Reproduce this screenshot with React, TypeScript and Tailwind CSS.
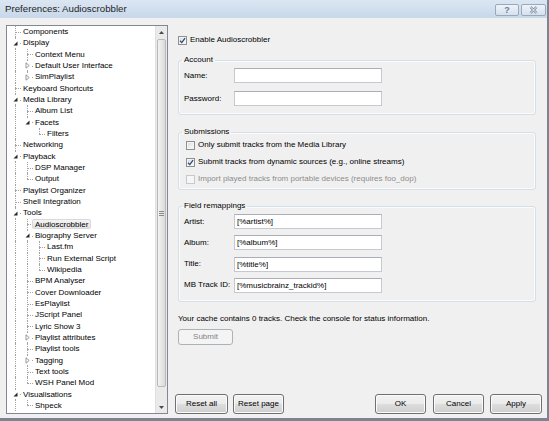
import React from 'react';

type Node = { label: string; level: number; exp?: 'open' | 'closed'; sel?: boolean };

const tree: Node[] = [
  { label: 'Components', level: 0 },
  { label: 'Display', level: 0, exp: 'open' },
  { label: 'Context Menu', level: 1 },
  { label: 'Default User Interface', level: 1, exp: 'closed' },
  { label: 'SimPlaylist', level: 1, exp: 'closed' },
  { label: 'Keyboard Shortcuts', level: 0 },
  { label: 'Media Library', level: 0, exp: 'open' },
  { label: 'Album List', level: 1 },
  { label: 'Facets', level: 1, exp: 'open' },
  { label: 'Filters', level: 2 },
  { label: 'Networking', level: 0 },
  { label: 'Playback', level: 0, exp: 'open' },
  { label: 'DSP Manager', level: 1 },
  { label: 'Output', level: 1 },
  { label: 'Playlist Organizer', level: 0 },
  { label: 'Shell Integration', level: 0 },
  { label: 'Tools', level: 0, exp: 'open' },
  { label: 'Audioscrobbler', level: 1, sel: true },
  { label: 'Biography Server', level: 1, exp: 'open' },
  { label: 'Last.fm', level: 2 },
  { label: 'Run External Script', level: 2 },
  { label: 'Wikipedia', level: 2 },
  { label: 'BPM Analyser', level: 1 },
  { label: 'Cover Downloader', level: 1 },
  { label: 'EsPlaylist', level: 1 },
  { label: 'JScript Panel', level: 1 },
  { label: 'Lyric Show 3', level: 1 },
  { label: 'Playlist attributes', level: 1, exp: 'closed' },
  { label: 'Playlist tools', level: 1 },
  { label: 'Tagging', level: 1, exp: 'closed' },
  { label: 'Text tools', level: 1 },
  { label: 'WSH Panel Mod', level: 1 },
  { label: 'Visualisations', level: 0, exp: 'open' },
  { label: 'Shpeck', level: 1 },
];

// does the item at i have a sibling further down (root level always continues below)
function hasNext(i: number) {
  const L = tree[i].level;
  for (let j = i + 1; j < tree.length; j++) {
    if (tree[j].level < L) return false;
    if (tree[j].level === L) return true;
  }
  return L === 0;
}

function ancestorContinues(i: number, k: number) {
  for (let j = i - 1; j >= 0; j--) {
    if (tree[j].level === k) return hasNext(j);
  }
  return false;
}

const line = 'absolute w-0 border-l border-dotted border-[#a3a3a3]';

function TreeRow({ node, idx }: { node: Node; idx: number }) {
  const L = node.level;
  const x = 8 + 12 * L;
  const ancestors = Array.from({ length: L }, (_, k) => k).filter(k => ancestorContinues(idx, k));
  return (
    <div className="relative h-[11.34px] leading-[11.34px] whitespace-nowrap">
      {ancestors.map(k => (
        <span key={k} className={`${line} top-0 bottom-0`} style={{ left: 8 + 12 * k }} />
      ))}
      <span className={`${line} top-0 ${hasNext(idx) ? 'bottom-0' : 'h-1/2'}`} style={{ left: x }} />
      <span className="absolute top-1/2 h-0 w-[6px] border-t border-dotted border-[#a3a3a3]" style={{ left: x }} />
      {node.exp === 'open' && (
        <svg className="absolute top-[2.5px]" style={{ left: x - 3 }} width="7" height="7" viewBox="0 0 7 7">
          <rect x="0" y="0" width="7" height="7" fill="#fff" />
          <polygon points="5.5,1.5 5.5,5.5 1.5,5.5" fill="#262626" />
        </svg>
      )}
      {node.exp === 'closed' && (
        <svg className="absolute top-[2.5px]" style={{ left: x - 2 }} width="6" height="7" viewBox="0 0 6 7">
          <rect x="0" y="0" width="6" height="7" fill="#fff" />
          <polygon points="1,0.8 4.2,3.5 1,6.2" fill="#fff" stroke="#8f8f8f" strokeWidth="0.9" />
        </svg>
      )}
      {node.sel ? (
        <span
          className="relative inline-block h-[10px] leading-[9px] px-[2px] rounded-[2px] border border-[#d9d9d9] bg-[linear-gradient(to_bottom,#f4f4f4,#e4e4e4)] text-black"
          style={{ marginLeft: 13 + 12 * L }}
        >
          {node.label}
        </span>
      ) : (
        <span className="relative px-[3px] text-black" style={{ marginLeft: 13 + 12 * L }}>
          {node.label}
        </span>
      )}
    </div>
  );
}

function Check({ checked, disabled }: { checked?: boolean; disabled?: boolean }) {
  return (
    <span
      className={`w-[9px] h-[9px] shrink-0 flex items-center justify-center border ${
        disabled
          ? 'border-[#c9c9c9] bg-[#f6f6f6]'
          : 'border-[#8e8f8f] bg-[linear-gradient(135deg,#d6d8db,#ffffff)] shadow-[inset_0_0_0_1px_#f4f4f4]'
      }`}
    >
      {checked && (
        <svg width="7" height="7" viewBox="0 0 7 7">
          <path d="M1 3.7 L2.8 5.6 L6.1 1.1" fill="none" stroke="#30487f" strokeWidth="1.3" />
        </svg>
      )}
    </span>
  );
}

function Group({ title, children, className }: { title: string; children: React.ReactNode; className?: string }) {
  return (
    <fieldset className={`border border-[#d5dfe5] rounded-[3px] shadow-[inset_0_0_0_1px_#fafbfc] ${className ?? ''}`}>
      <legend className="ml-[3px] px-[2px] leading-[10px] text-black">{title}</legend>
      {children}
    </fieldset>
  );
}

function Field({ label, value }: { label: string; value: string }) {
  return (
    <div className="flex items-center h-[15px]">
      <span className="w-[50px] shrink-0">{label}</span>
      <input
        readOnly
        value={value}
        className="w-[148px] h-[15px] border border-[#c6cad0] border-t-[#abafb5] bg-white px-[2px] text-[8px] text-black outline-none"
      />
    </div>
  );
}

const btn =
  'h-[20px] rounded-[3px] border border-[#707070] bg-[linear-gradient(to_bottom,#f2f2f2_0%,#ebebeb_50%,#dddddd_50%,#cfcfcf_100%)] shadow-[inset_0_0_0_1px_#fbfbfb] text-[8px] text-black leading-none';

export default function App() {
  return (
    <div className="w-[549px] h-[421px] flex flex-col bg-[#f0f0f0] border-r-2 border-b-[3px] border-[#7b8490] font-['Liberation_Sans',Arial,sans-serif] text-[8px] text-black overflow-hidden">
      {/* title bar */}
      <div className="h-[18px] shrink-0 flex items-start pl-[5px] pr-[1px] bg-[linear-gradient(to_bottom,#dbe6f2,#c8d8ea)]">
        <span className="mt-[4px] text-[9.7px] leading-[10px] text-[#1e1e1e]">Preferences: Audioscrobbler</span>
        <div className="ml-auto mt-[4px] flex gap-[2px]">
          <div className="w-[24px] h-[12px] rounded-[2px] border border-[#99a9bd] bg-[linear-gradient(to_bottom,#eef3f9,#d5e0ed)] flex items-center justify-center">
            <span className="text-[9px] leading-none font-bold text-[#6c7c90]">?</span>
          </div>
          <div className="w-[25px] h-[12px] rounded-[2px] border border-[#99a9bd] bg-[linear-gradient(to_bottom,#eef3f9,#d5e0ed)] flex items-center justify-center">
            <svg width="9" height="8" viewBox="0 0 9 8">
              <path d="M1.5 1 L7.5 7 M7.5 1 L1.5 7" stroke="#6f7f93" strokeWidth="2.4" />
              <path d="M1.5 1 L7.5 7 M7.5 1 L1.5 7" stroke="#ffffff" strokeWidth="1" />
            </svg>
          </div>
        </div>
      </div>

      {/* body */}
      <div className="flex-1 flex pt-[7px] pb-[4px] pl-[6px] pr-[5px] min-h-0">
        {/* tree */}
        <div className="w-[162px] h-[389px] border border-[#828790] bg-white flex overflow-hidden">
          <div className="flex-1 overflow-hidden">
            {tree.map((n, i) => (
              <TreeRow key={n.label} node={n} idx={i} />
            ))}
          </div>
          <div className="w-[12px] flex flex-col bg-[#eaeaea] border-l border-[#e0e0e0]">
            <div className="h-[13px] flex items-center justify-center">
              <svg width="5" height="3" viewBox="0 0 5 3">
                <polygon points="2.5,0 5,3 0,3" fill="#4a4a4a" />
              </svg>
            </div>
            <div className="h-[348px] mx-[1px] rounded-[2px] border border-[#b9b9b9] bg-[linear-gradient(to_right,#f3f3f3,#dadada)] flex flex-col items-center justify-center gap-[1px]">
              <span className="w-[5px] h-px bg-[#8a8a8a]" />
              <span className="w-[5px] h-px bg-[#8a8a8a]" />
              <span className="w-[5px] h-px bg-[#8a8a8a]" />
            </div>
            <div className="flex-1" />
            <div className="h-[12px] flex items-center justify-center">
              <svg width="5" height="3" viewBox="0 0 5 3">
                <polygon points="0,0 5,0 2.5,3" fill="#4a4a4a" />
              </svg>
            </div>
          </div>
        </div>

        {/* page */}
        <div className="flex-1 flex flex-col ml-[7px]">
          <div className="flex flex-col pl-[3px] pr-[6px]">
            <label className="mt-[9px] h-[12px] flex items-center gap-[3px]">
              <Check checked />
              <span>Enable Audioscrobbler</span>
            </label>

            <Group title="Account" className="mt-[9px]">
              <div className="flex flex-col gap-[8px] pt-[3px] pb-[8px] pl-[5px]">
                <Field label="Name:" value="" />
                <Field label="Password:" value="" />
              </div>
            </Group>

            <Group title="Submissions" className="mt-[12px]">
              <div className="flex flex-col gap-[5px] pt-[2px] pb-[4px] pl-[7px]">
                <div className="h-[12px] flex items-center gap-[3px]">
                  <Check />
                  <span>Only submit tracks from the Media Library</span>
                </div>
                <div className="h-[12px] flex items-center gap-[3px]">
                  <Check checked />
                  <span>Submit tracks from dynamic sources (e.g., online streams)</span>
                </div>
                <div className="h-[12px] flex items-center gap-[3px]">
                  <Check disabled />
                  <span className="text-[#8d8d8d]">Import played tracks from portable devices (requires foo_dop)</span>
                </div>
              </div>
            </Group>

            <Group title="Field remappings" className="mt-[11px]">
              <div className="flex flex-col gap-[6.3px] pt-[3px] pb-[8px] pl-[5px]">
                <Field label="Artist:" value="[%artist%]" />
                <Field label="Album:" value="[%album%]" />
                <Field label="Title:" value="[%title%]" />
                <Field label="MB Track ID:" value="[%musicbrainz_trackid%]" />
              </div>
            </Group>

            <p className="mt-[11px] h-[12px] leading-[12px]">
              Your cache contains 0 tracks. Check the console for status information.
            </p>
            <button
              disabled
              className="mt-[4px] w-[55px] h-[16px] rounded-[3px] border border-[#adb2b5] bg-[#f4f4f4] text-[8px] leading-none text-[#838383]"
            >
              Submit
            </button>
          </div>

          <div className="mt-auto flex items-end">
            <button className={`${btn} w-[53px]`}>Reset all</button>
            <button className={`${btn} w-[51px] ml-[5px]`}>Reset page</button>
            <button className={`${btn} w-[51px] ml-auto border-[#3c7fb1] shadow-[inset_0_0_0_1px_#a9dcf6]`}>OK</button>
            <button className={`${btn} w-[51px] ml-[7px]`}>Cancel</button>
            <button className={`${btn} w-[52px] ml-[6px]`}>Apply</button>
          </div>
        </div>
      </div>
    </div>
  );
}
